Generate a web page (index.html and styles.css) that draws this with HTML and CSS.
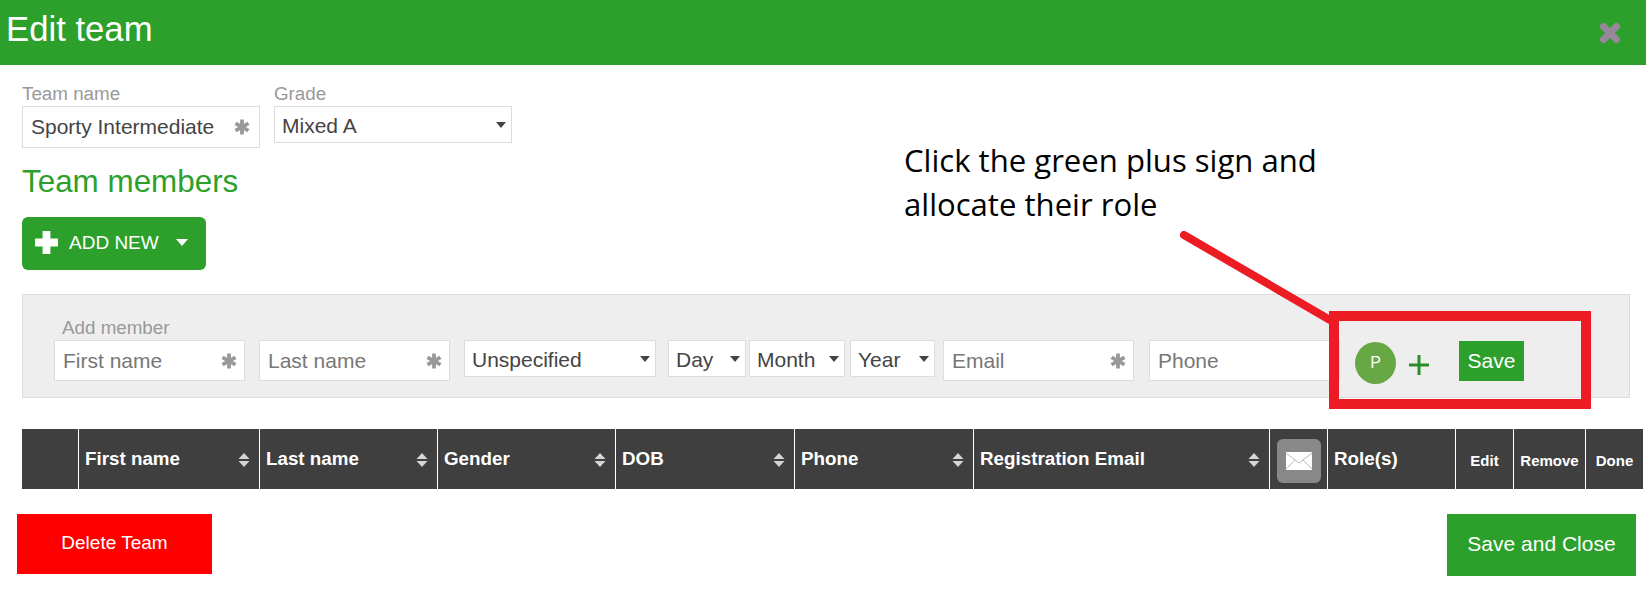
FILE: index.html
```html
<!DOCTYPE html>
<html lang="en">
<head>
<meta charset="utf-8">
<title>Edit team</title>
<link rel="stylesheet" href="styles.css">
</head>
<body>
<svg width="0" height="0" class="defs">
  <defs>
    <symbol id="star" viewBox="0 0 16 16"><path d="M8 .5v15M1.500 4.300l13 7.400M14.500 4.300l-13 7.400" fill="none" stroke="#999" stroke-width="3.800"/></symbol>
    <symbol id="sort" viewBox="0 0 12 14"><path d="M6 0l5.500 6H.5zM6 14L.5 8h11z" fill="#d4d4d4"/></symbol>
  </defs>
</svg>
<header class="topbar">
  <h1 class="title">Edit team</h1>
  <svg class="close" viewBox="0 0 22 22"><path d="M4.500 4.500l13 13M17.500 4.500l-13 13" stroke="#96889a" stroke-width="7" stroke-linecap="round"/></svg>
</header>
<main class="content">
  <div class="team-row">
    <div class="field">
      <label class="label">Team name</label>
      <div class="box box-team"><input class="input input-dark" value="Sporty Intermediate"><svg class="star"><use href="#star"/></svg></div>
    </div>
    <div class="field">
      <label class="label">Grade</label>
      <div class="box box-select box-grade"><select class="select"><option>Mixed A</option></select><span class="caret"></span></div>
    </div>
  </div>
  <h2 class="section">Team members</h2>
  <button class="add-new">
    <svg class="add-plus" viewBox="0 0 22 22"><path d="M11 1v20M1 11h20" stroke="#fff" stroke-width="7.500" stroke-linecap="round"/></svg>
    <span>ADD NEW</span>
    <span class="caret caret-white"></span>
  </button>
  <section class="panel">
    <label class="label label-add">Add member</label>
    <div class="add-row">
      <div class="box w191"><input class="input" placeholder="First name"><svg class="star"><use href="#star"/></svg></div>
      <div class="box w191 gap-t"><input class="input" placeholder="Last name"><svg class="star"><use href="#star"/></svg></div>
      <div class="box box-select w192 gap-t"><select class="select"><option>Unspecified</option></select><span class="caret"></span></div>
      <div class="box box-select w78 gap-l"><select class="select"><option>Day</option></select><span class="caret"></span></div>
      <div class="box box-select w96 gap-d"><select class="select"><option>Month</option></select><span class="caret"></span></div>
      <div class="box box-select w85 gap-s"><select class="select"><option>Year</option></select><span class="caret"></span></div>
      <div class="box w191 gap-m"><input class="input" placeholder="Email"><svg class="star"><use href="#star"/></svg></div>
      <div class="box w191"><input class="input" placeholder="Phone"></div>
      <span class="avatar">P</span>
      <svg class="plus" viewBox="0 0 20 20"><path d="M10 0v20M0 10h20" stroke="#2a8f2a" stroke-width="3"/></svg>
      <button class="save">Save</button>
    </div>
  </section>
  <div class="table-head">
    <div class="th"></div>
    <div class="th">First name<svg class="sort"><use href="#sort"/></svg></div>
    <div class="th">Last name<svg class="sort"><use href="#sort"/></svg></div>
    <div class="th">Gender<svg class="sort"><use href="#sort"/></svg></div>
    <div class="th">DOB<svg class="sort"><use href="#sort"/></svg></div>
    <div class="th">Phone<svg class="sort"><use href="#sort"/></svg></div>
    <div class="th">Registration Email<svg class="sort"><use href="#sort"/></svg></div>
    <div class="th th-mail">
      <span class="mail"><svg class="mail-icon" viewBox="0 0 26 18"><path d="M0 0h26v18H0z" fill="#fff"/><path d="M0 1l13 10L26 1M0 17l9-9M26 17l-9-9" fill="none" stroke="#bbb" stroke-width="1"/></svg></span>
    </div>
    <div class="th">Role(s)</div>
    <div class="th th-small">Edit</div>
    <div class="th th-small">Remove</div>
    <div class="th th-small">Done</div>
  </div>
  <div class="footer">
    <button class="delete">Delete Team</button>
    <button class="save-close">Save and Close</button>
  </div>
</main>
<p class="note">Click the green plus sign and<br>allocate their role</p>
<svg class="pointer" viewBox="0 0 160 100"><path d="M4 4L150 89" stroke="#ed1c24" stroke-width="8" stroke-linecap="round"/></svg>
<div class="highlight"></div>
</body>
</html>
```

FILE: styles.css
```css
* { box-sizing: border-box; }
html, body { margin: 0; padding: 0; }
body {
  position: relative;
  width: 1646px;
  height: 589px;
  overflow: hidden;
  background: #fff;
  font-family: "Liberation Sans", Arial, sans-serif;
  color: #444;
}
.defs { position: absolute; }
.topbar {
  height: 65px;
  background: #2ca02a;
  display: flex;
  align-items: center;
  justify-content: space-between;
  padding: 0 25px 0 6px;
}
.title { margin: 0 0 6px; font-size: 34.700px; font-weight: 400; color: #fff; line-height: 59px; }
.close { width: 22px; height: 22px; }
.content { padding: 19px 0 0 22px; }
.team-row { display: flex; gap: 14px; }
.field { display: flex; flex-direction: column; }
.label { display: block; height: 20px; margin-bottom: 2px; font-size: 18.800px; line-height: 20px; color: #999; }
.label-add { margin-left: 8px; }
.box {
  position: relative;
  display: flex;
  align-items: center;
  background: #fff;
  border: 1px solid #ddd;
  height: 41px;
}
.box-team { width: 238px; height: 42px; }
.box-grade { width: 238px; }
.box-select { height: 37px; }
.w191 { width: 191px; }
.w192 { width: 192px; }
.w78 { width: 78px; }
.w96 { width: 96px; }
.w85 { width: 85px; }
.gap-t { margin-left: -1px; }
.gap-l { margin-left: -3px; }
.gap-d { margin-left: -12px; }
.gap-s { margin-left: -10px; }
.gap-m { margin-left: -7px; }
.input {
  flex: 1;
  min-width: 0;
  height: 100%;
  border: 0;
  padding: 0 0 0 8px;
  background: transparent;
  font: 21px "Liberation Sans", Arial, sans-serif;
  color: #444;
  outline: 0;
}
.input::placeholder { color: #777; opacity: 1; }
.select {
  appearance: none;
  width: 100%;
  height: 100%;
  border: 0;
  padding: 1px 0 0 7px;
  background: transparent;
  font: 21px "Liberation Sans", Arial, sans-serif;
  color: #444;
  outline: 0;
}
.star { flex: none; width: 16px; height: 16px; margin-right: 9px; }
.add-row .star { margin-right: 7px; }
.caret {
  position: absolute;
  right: 5px;
  top: 15px;
  width: 0;
  height: 0;
  border: 5px solid transparent;
  border-top: 6px solid #444;
  border-bottom: 0;
  pointer-events: none;
}
.section { margin: 16px 0 17px; font-size: 31.400px; font-weight: 400; line-height: 36px; color: #2ca02a; }
.add-new {
  display: flex;
  align-items: center;
  width: 184px;
  height: 53px;
  padding: 0 0 2px 13px;
  border: 0;
  border-radius: 6px;
  background: #2ca02a;
  color: #fff;
  font: 19px "Liberation Sans", Arial, sans-serif;
}
.add-plus { width: 23px; height: 23px; margin-right: 11px; }
.caret-white {
  position: static;
  margin-left: 17px;
  border-width: 6px;
  border-top: 7px solid #fff;
  border-bottom: 0;
}
.panel {
  width: 1608px;
  height: 104px;
  margin-top: 24px;
  padding: 23px 0 0 31px;
  background: #eee;
  border: 1px solid #ddd;
}
.add-row { display: flex; align-items: flex-start; gap: 15px; }
.avatar {
  display: flex;
  align-items: center;
  justify-content: center;
  width: 41px;
  height: 42px;
  margin-top: 2px;
  border-radius: 50%;
  background: #67a844;
  color: #fff;
  font-size: 16px;
}
.plus { width: 20px; height: 20px; margin: 15px 15px 0 -2px; }
.save {
  width: 65px;
  height: 40px;
  margin-top: 1px;
  padding: 0;
  border: 0;
  background: #2ca02a;
  color: #fff;
  font: 21px "Liberation Sans", Arial, sans-serif;
}
.table-head {
  display: grid;
  grid-template-columns: 56px 181px 178px 178px 179px 179px 296px 58px 128px 58px 72px 58px;
  width: 1621px;
  height: 60px;
  margin-top: 31px;
  background: #3f3f3f;
}
.th {
  display: flex;
  align-items: center;
  justify-content: space-between;
  padding: 0 9px 1px 6px;
  border-left: 1px solid #fff;
  color: #fff;
  font-size: 18.800px;
  font-weight: 700;
}
.th:first-child { border-left: 0; }
.sort { flex: none; width: 12px; height: 14px; margin-top: 2px; }
.th-mail { padding: 0; justify-content: center; }
.mail {
  display: flex;
  align-items: center;
  justify-content: center;
  width: 44px;
  height: 44px;
  margin-top: 3px;
  border-radius: 6px;
  background: #888;
}
.mail-icon { width: 26px; height: 18px; }
.th-small { justify-content: center; padding: 3px 0 0; font-size: 15px; }
.footer {
  display: flex;
  align-items: flex-start;
  justify-content: space-between;
  margin: 25px 10px 0 -5px;
}
.delete {
  width: 195px;
  height: 60px;
  border: 0;
  padding: 0 0 2px;
  background: #f00;
  color: #fff;
  font: 19px "Liberation Sans", Arial, sans-serif;
}
.save-close {
  width: 189px;
  height: 62px;
  border: 0;
  padding: 0 0 2px;
  background: #2ca02a;
  color: #fff;
  font: 21px "Liberation Sans", Arial, sans-serif;
}
.note {
  position: absolute;
  left: 904px;
  top: 138px;
  margin: 0;
  font-family: "Open Sans", sans-serif;
  font-size: 31.100px;
  line-height: 44px;
  color: #000;
  white-space: nowrap;
}
.pointer { position: absolute; left: 1180px; top: 231px; width: 160px; height: 100px; }
.highlight {
  position: absolute;
  left: 1329px;
  top: 311px;
  width: 262px;
  height: 98px;
  border: 10px solid #ed1c24;
}
```
